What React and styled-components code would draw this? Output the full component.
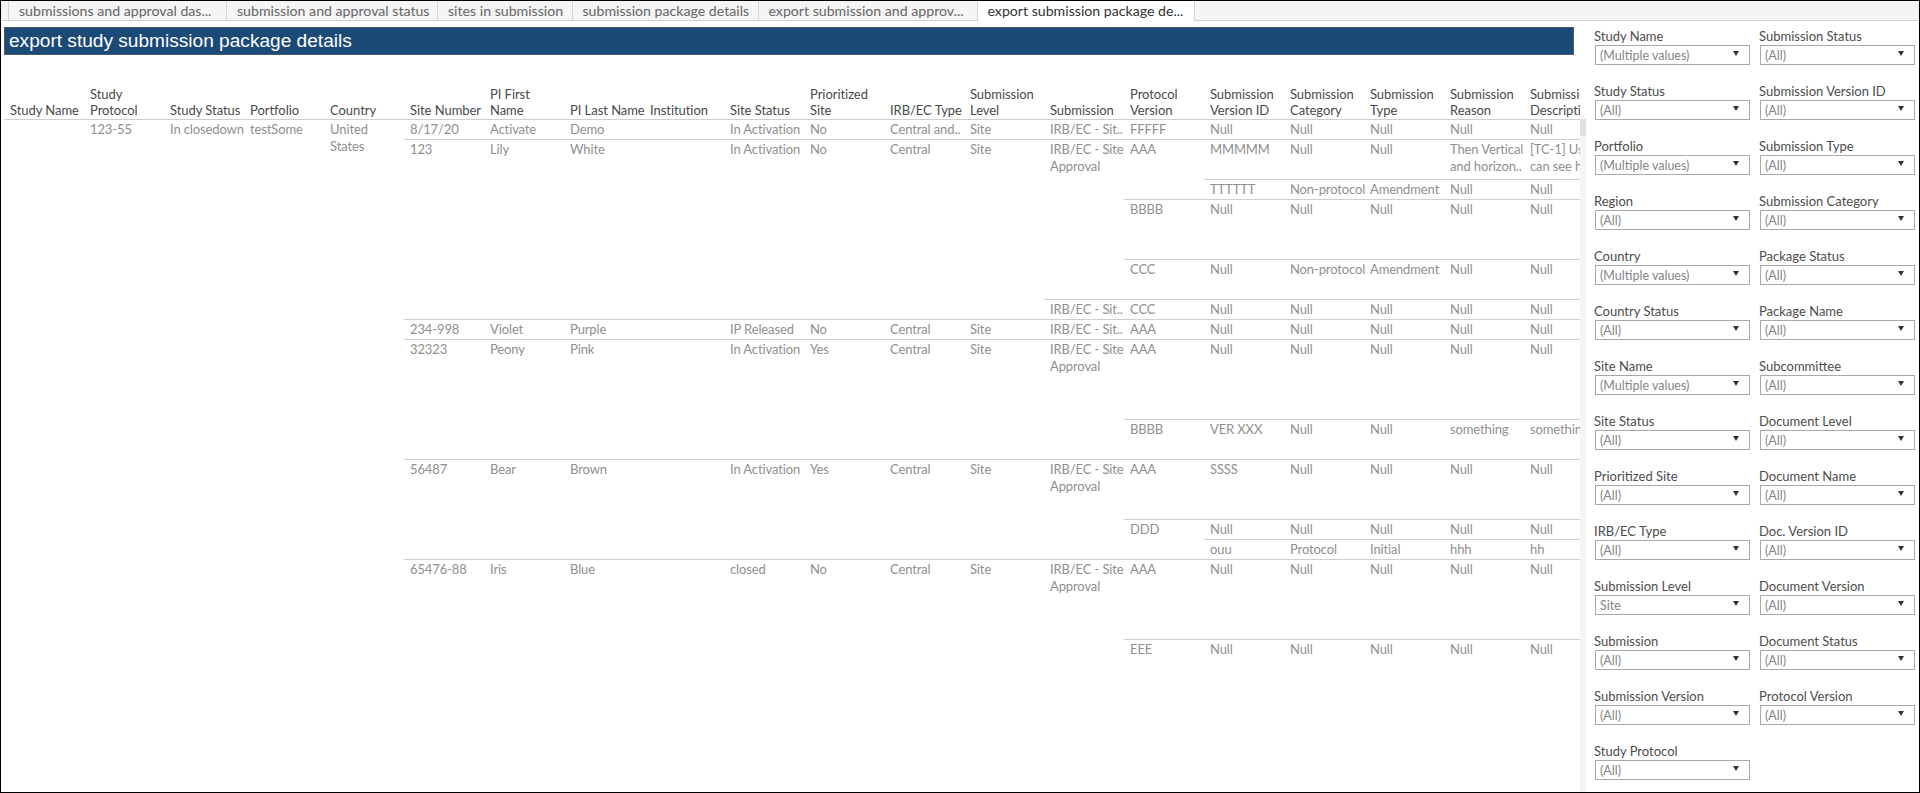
import React from "react";
import styled, { createGlobalStyle } from "styled-components";

const Global = createGlobalStyle`
  html, body { margin: 0; padding: 0; background: #fff; }
  * { box-sizing: border-box; }
  body { font-family: "Lato", "Liberation Sans", sans-serif; }
`;

const Frame = styled.div`
  width: 1920px; height: 793px; border: 1px solid #000; background: #fff;
  display: flex; flex-direction: column; overflow: hidden;
`;
const TabBar = styled.div`
  height: 20px; flex: none; display: flex; padding-left: 7px;
  background: #f5f5f5; border-bottom: 1px solid #cfcfcf;
`;
const Tab = styled.div`
  width: ${p => p.$w}px; height: ${p => (p.$active ? 20 : 19)}px; padding-left: 10px;
  border-right: 1px solid #d4d4d4;
  ${p => p.$first && "border-left: 1px solid #d4d4d4;"}
  background: ${p => (p.$active ? "#fff" : "transparent")};
  color: ${p => (p.$active ? "#333" : "#666")};
  font-size: 14.15px; line-height: 20px; white-space: nowrap;
`;
const Body = styled.div`flex: 1; display: flex; min-height: 0;`;
const Main = styled.div`
  width: 1585px; flex: none; padding-left: 3px; display: flex; flex-direction: column; min-height: 0;
`;
const Title = styled.div`
  height: 28px; margin-top: 6px; width: 1570px; flex: none; padding-left: 4px;
  background: #1c4a77; border: 1px solid #4a5a68; color: #fff;
  font-family: "Liberation Sans", Arial, sans-serif; font-size: 19.1px; line-height: 26px;
`;
const HeaderRow = styled.div`
  margin-top: 29px; width: 1576px; height: 35px; padding-bottom: 1px; flex: none; display: flex; align-items: flex-end; overflow: hidden;
`;
const HeaderCell = styled.div`
  width: 80px; flex: none; padding-left: 6px; color: #4a4a4a; font-size: 13px; letter-spacing: -0.05px; line-height: 16px; white-space: pre;
`;
const TableBody = styled.div`flex: 1; display: flex; min-height: 0;`;
const Tree = styled.div`width: 1576px; flex: none; overflow: hidden;`;
const Track = styled.div`width: 6px; flex: none; background: #f5f5f5;`;
const Thumb = styled.div`height: 17px; background: #e1e1e1;`;

const Branch = styled.div`
  display: flex;
  ${p => p.$line && "box-shadow: inset 0 1px 0 #cfcfcf;"}
  ${p => p.$h && `height: ${p.$h}px;`}
`;
const Children = styled.div`display: flex; flex-direction: column; flex: none;`;
const Cell = styled.div`
  width: 80px; flex: none; padding: 2px 0 0 6px; color: #8f8f8f; font-size: 13px; letter-spacing: -0.12px; line-height: 17px; white-space: pre;
`;

const Panel = styled.div`
  flex: 1; display: grid; grid-template-columns: 165px 165px; grid-auto-rows: 55px; padding: 7px 0 0 8px;
`;
const Filter = styled.div`display: flex; flex-direction: column;`;
const FilterLabel = styled.div`color: #4d4d4d; font-size: 13px; line-height: 16px; height: 17px;`;
const Dropdown = styled.div`
  margin-left: 1px; width: 155px; height: 20px; border: 1px solid #a9a9a9; display: flex; align-items: center;
  justify-content: space-between; padding: 1px 10px 0 4px; color: #858585; font-size: 12.5px; line-height: 18px;
`;
const Arrow = styled.svg`width: 6px; height: 5px; flex: none; margin-bottom: 4px; fill: #333;`;

const nulls = ["Null", "Null", "Null", "Null", "Null"];
const ver = (cells, h, kids) => ({ cells, h, kids });
const sub = "IRB/EC - Site\nApproval";
const subShort = "IRB/EC - Sit..";

const tree = ver(["", "123-55", "In closedown", "testSome", "United\nStates"], null, [
  ver(["8/17/20", "Activate", "Demo", "", "In Activation", "No", "Central and..", "Site", subShort, "FFFFF"], null, [ver(nulls, 20)]),
  ver(["123", "Lily", "White", "", "In Activation", "No", "Central", "Site"], null, [
    ver([sub], null, [
      ver(["AAA"], null, [
        ver(["MMMMM", "Null", "Null", "Then Vertical\nand horizon..", "[TC-1] Us\ncan see h"], 40),
        ver(["TTTTTT", "Non-protocol", "Amendment", "Null", "Null"], 20),
      ]),
      ver(["BBBB"], null, [ver(nulls, 60)]),
      ver(["CCC"], null, [ver(["Null", "Non-protocol", "Amendment", "Null", "Null"], 40)]),
    ]),
    ver([subShort, "CCC"], null, [ver(nulls, 20)]),
  ]),
  ver(["234-998", "Violet", "Purple", "", "IP Released", "No", "Central", "Site", subShort, "AAA"], null, [ver(nulls, 20)]),
  ver(["32323", "Peony", "Pink", "", "In Activation", "Yes", "Central", "Site", sub], null, [
    ver(["AAA"], null, [ver(nulls, 80)]),
    ver(["BBBB"], null, [ver(["VER XXX", "Null", "Null", "something", "something"], 40)]),
  ]),
  ver(["56487", "Bear", "Brown", "", "In Activation", "Yes", "Central", "Site", sub], null, [
    ver(["AAA"], null, [ver(["SSSS", "Null", "Null", "Null", "Null"], 60)]),
    ver(["DDD"], null, [
      ver(nulls, 20),
      ver(["ouu", "Protocol", "Initial", "hhh", "hh"], 20),
    ]),
  ]),
  ver(["65476-88", "Iris", "Blue", "", "closed", "No", "Central", "Site", sub], null, [
    ver(["AAA"], null, [ver(nulls, 80)]),
    ver(["EEE"], null, [ver(nulls, 40)]),
  ]),
]);

function Node({ node, line }) {
  return (
    <Branch $line={line} $h={node.h}>
      {node.cells.map((c, i) => <Cell key={i}>{c}</Cell>)}
      {node.kids && (
        <Children>
          {node.kids.map((k, i) => <Node key={i} node={k} line={i > 0} />)}
        </Children>
      )}
    </Branch>
  );
}

const tabs = [
  ["submissions and approval das...", 219],
  ["submission and approval status", 211],
  ["sites in submission", 134.5],
  ["submission package details", 186],
  ["export submission and approv...", 219],
  ["export submission package de...", 217],
];
const headers = ["Study Name", "Study\nProtocol", "Study Status", "Portfolio", "Country", "Site Number", "PI First\nName", "PI Last Name", "Institution", "Site Status", "Prioritized\nSite", "IRB/EC Type", "Submission\nLevel", "Submission", "Protocol\nVersion", "Submission\nVersion ID", "Submission\nCategory", "Submission\nType", "Submission\nReason", "Submission\nDescription"];
const filters = [
  ["Study Name", "(Multiple values)"], ["Submission Status", "(All)"],
  ["Study Status", "(All)"], ["Submission Version ID", "(All)"],
  ["Portfolio", "(Multiple values)"], ["Submission Type", "(All)"],
  ["Region", "(All)"], ["Submission Category", "(All)"],
  ["Country", "(Multiple values)"], ["Package Status", "(All)"],
  ["Country Status", "(All)"], ["Package Name", "(All)"],
  ["Site Name", "(Multiple values)"], ["Subcommittee", "(All)"],
  ["Site Status", "(All)"], ["Document Level", "(All)"],
  ["Prioritized Site", "(All)"], ["Document Name", "(All)"],
  ["IRB/EC Type", "(All)"], ["Doc. Version ID", "(All)"],
  ["Submission Level", "Site"], ["Document Version", "(All)"],
  ["Submission", "(All)"], ["Document Status", "(All)"],
  ["Submission Version", "(All)"], ["Protocol Version", "(All)"],
  ["Study Protocol", "(All)"],
];

export default function App() {
  return (
    <Frame>
      <Global />
      <TabBar>
        {tabs.map(([t, w], i) => <Tab key={t} $w={w} $first={i === 0} $active={i === 5}>{t}</Tab>)}
      </TabBar>
      <Body>
        <Main>
          <Title>export study submission package details</Title>
          <HeaderRow>
            {headers.map(h => <HeaderCell key={h}>{h}</HeaderCell>)}
          </HeaderRow>
          <TableBody>
            <Tree><Node node={tree} line /></Tree>
            <Track><Thumb /></Track>
          </TableBody>
        </Main>
        <Panel>
          {filters.map(([l, v]) => (
            <Filter key={l}>
              <FilterLabel>{l}</FilterLabel>
              <Dropdown>
                {v}
                <Arrow viewBox="0 0 6 5"><path d="M0 0h6L3 5z" /></Arrow>
              </Dropdown>
            </Filter>
          ))}
        </Panel>
      </Body>
    </Frame>
  );
}
